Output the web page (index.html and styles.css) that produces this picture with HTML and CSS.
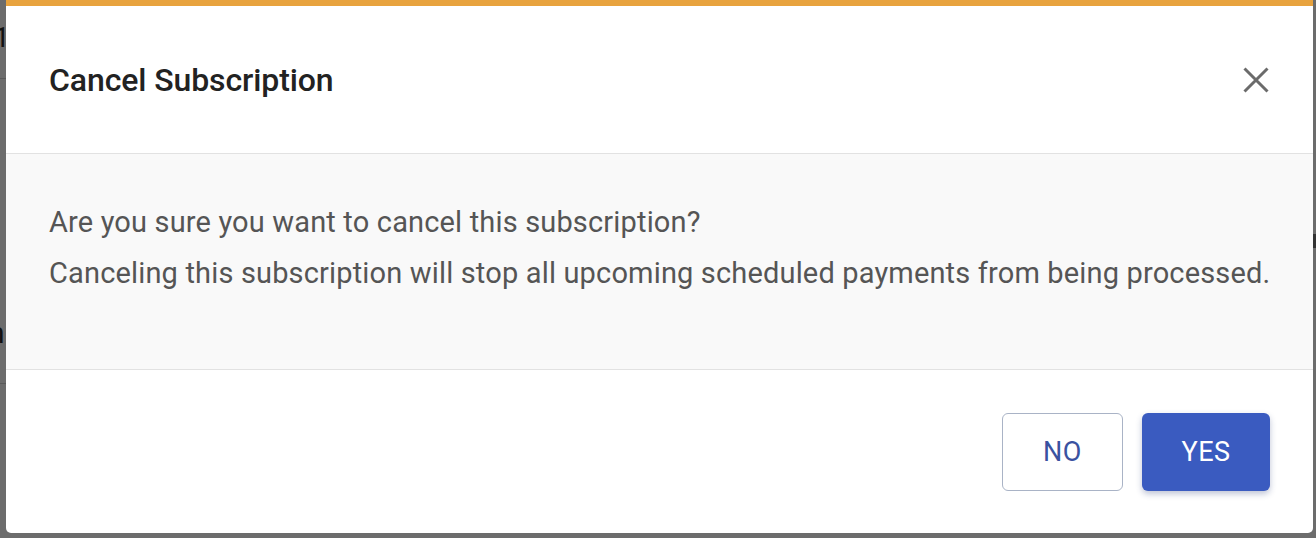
FILE: index.html
```html
<!DOCTYPE html>
<html>
<head>
<meta charset="utf-8">
<link rel="stylesheet" href="styles.css">
</head>
<body>
<div class="backdrop">
  <span class="bg-frag frag-1">1</span>
  <span class="bg-line line-1"></span>
  <span class="bg-frag frag-2">n</span>
  <span class="bg-line line-2"></span>
  <span class="bg-mark"></span>
</div>
<div class="dialog">
  <div class="dialog-header">
    <h2 class="dialog-title">Cancel Subscription</h2>
    <button class="close-btn" aria-label="Close">
      <svg width="26" height="26" viewBox="0 0 26 26"><path d="M1.5 1.5 L24.5 24.5 M24.5 1.5 L1.5 24.5" stroke="#6b6b6b" stroke-width="3" fill="none"/></svg>
    </button>
  </div>
  <div class="dialog-body">
    <p>Are you sure you want to cancel this subscription?</p>
    <p>Canceling this subscription will stop all upcoming scheduled payments from being processed.</p>
  </div>
  <div class="dialog-footer">
    <button class="btn btn-outline">NO</button>
    <button class="btn btn-primary">YES</button>
  </div>
</div>
</body>
</html>
```

FILE: styles.css
```css
html, body {
  margin: 0;
  padding: 0;
}
body {
  width: 1316px;
  height: 538px;
  background: #6c6c6c;
  font-family: Roboto, "Liberation Sans", Arial, sans-serif;
  position: relative;
  overflow: hidden;
}
.backdrop {
  position: absolute;
  inset: 0;
}
.bg-frag {
  position: absolute;
  left: -6px;
  font-size: 28px;
  color: #111;
  line-height: 1;
}
.frag-1 { top: 24px; }
.frag-2 { top: 318px; left: -12px; font-size: 30px; }
.bg-line {
  position: absolute;
  left: 0;
  width: 20px;
  height: 1px;
  background: #5a5a5a;
}
.line-1 { top: 78px; }
.line-2 { top: 383px; }
.bg-mark {
  position: absolute;
  right: 0;
  top: 234px;
  width: 3px;
  height: 14px;
  background: #333;
}
.dialog {
  position: relative;
  margin-left: 6px;
  width: 1307px;
  height: 533px;
  box-sizing: border-box;
  background: #fff;
  border-top: 6px solid #e8a33e;
  border-radius: 0 0 5px 5px;
  display: flex;
  flex-direction: column;
  overflow: hidden;
}
.dialog-header {
  height: 148px;
  box-sizing: border-box;
  border-bottom: 1px solid #e2e2e2;
  display: flex;
  align-items: center;
  justify-content: space-between;
  padding: 0 43px 0 43px;
}
.dialog-title {
  margin: 0;
  font-size: 32px;
  font-weight: 500;
  color: #222;
  letter-spacing: -0.1px;
}
.close-btn {
  background: none;
  border: 0;
  padding: 0;
  width: 26px;
  height: 26px;
  display: flex;
  margin-right: 1px;
}
.dialog-body {
  height: 216px;
  box-sizing: border-box;
  background: #f9f9f9;
  border-bottom: 1px solid #e2e2e2;
  padding: 43px 20px 0 43px;
}
.dialog-body p {
  margin: 0;
  font-size: 29px;
  line-height: 51px;
  color: #555;
  letter-spacing: 0.16px;
  white-space: nowrap;
}
.dialog-footer {
  flex: 1;
  display: flex;
  justify-content: flex-end;
  align-items: flex-start;
  gap: 19px;
  padding: 43px 43px 0;
}
.btn {
  height: 78px;
  border-radius: 6px;
  font-family: Roboto, "Liberation Sans", Arial, sans-serif;
  font-size: 27px;
  letter-spacing: 0.5px;
  cursor: pointer;
}
.btn-outline {
  width: 121px;
  background: #fff;
  border: 1px solid #a9b3c6;
  color: #3a52a0;
}
.btn-primary {
  width: 128px;
  background: #3a5bc0;
  border: 0;
  color: #fff;
  box-shadow: 0 3px 6px rgba(40, 60, 120, 0.3);
}
```
